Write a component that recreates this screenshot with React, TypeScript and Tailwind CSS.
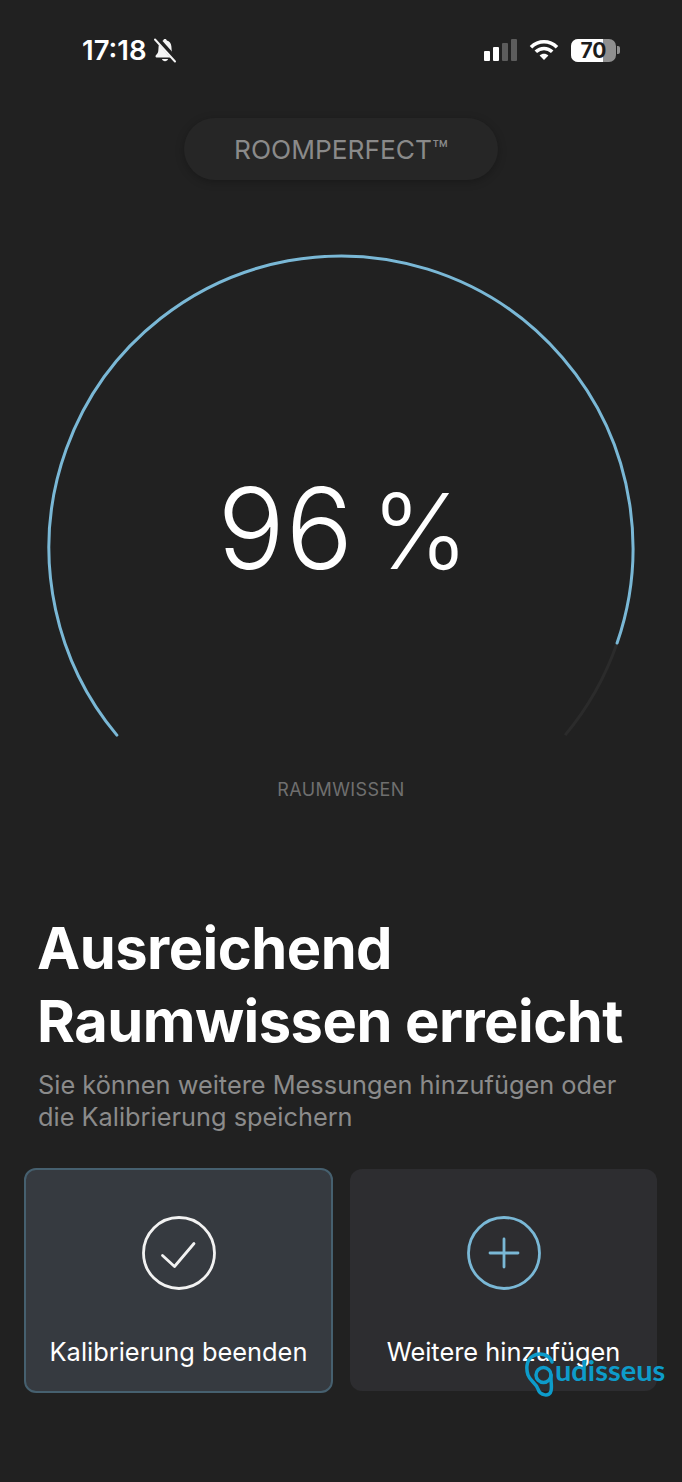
function StatusBar() {
  return (
    <div className="h-[100px] px-[82px] pt-[34px] flex justify-between items-start text-white">
      <div className="flex items-center gap-[6px] h-[32px]">
        <span className="text-[27.500px] leading-[32px] font-semibold">17:18</span>
        <svg width="24" height="26" viewBox="0 0 24 26" fill="#f4f4f4">
          <path d="M12 2c-1 0-1.700.7-1.800 1.600C7.600 4.300 5.800 6.400 5.600 9.500l-.3 4.200c-.1 1.800-1 3-2 4.100-.5.5-.8 1-.8 1.500 0 .8.600 1.300 1.500 1.300h16c.9 0 1.500-.5 1.500-1.300 0-.5-.3-1-.8-1.500-1-1.100-1.900-2.300-2-4.100l-.3-4.200c-.2-3.100-2-5.200-4.600-5.900C13.700 2.700 13 2 12 2z" />
          <path d="M9 22h6c-.3 1.300-1.500 2.200-3 2.200S9.300 23.300 9 22z" />
          <path d="M3.500 1 23 23" stroke="#212121" strokeWidth="5" />
          <path d="M2 2.500 22 24.500" stroke="#f4f4f4" strokeWidth="2" strokeLinecap="round" />
        </svg>
      </div>
      <div className="flex items-center gap-[12px] h-[32px] -mr-[20px]">
        <div className="flex items-end gap-[3px] h-[22px]">
          <div className="w-[6px] h-[10px] rounded-[1px] bg-white" />
          <div className="w-[6px] h-[14px] rounded-[1px] bg-white" />
          <div className="w-[6px] h-[18px] rounded-[1px] bg-[#5c5c5c]" />
          <div className="w-[6px] h-[22px] rounded-[1px] bg-[#5c5c5c]" />
        </div>
        <svg width="30" height="22" viewBox="0 0 30 22" fill="none" stroke="#fff" strokeWidth="3.600">
          <path d="M2 8.200C9.500 1 20.500 1 28 8.200" />
          <path d="M6.800 12.800C11.500 8.300 18.500 8.300 23.200 12.800" />
          <path d="M15 21l-4.400-4.600c2.500-2.200 6.300-2.200 8.800 0z" fill="#fff" stroke="none" />
        </svg>
        <div className="flex items-center gap-[1px]">
          <div className="relative w-[45px] h-[23px] rounded-[7px] overflow-hidden bg-[#8f8f8f] flex items-center justify-center">
            <div className="absolute left-0 top-0 bottom-0 w-[32px] bg-white" />
            <span className="relative text-[21px] leading-none font-bold text-[#1c1c1c]">70</span>
          </div>
          <div className="w-[3px] h-[8px] rounded-r-[2px] bg-[#8f8f8f]" />
        </div>
      </div>
    </div>
  );
}

function Gauge() {
  return (
    <div className="relative h-[500px] mt-[72px] mx-[46px]">
      <svg className="absolute inset-0" width="590" height="500" viewBox="46 252 590 500" fill="none">
        <path d="M617.090 643.070A292 292 0 0 1 565.140 735.150" stroke="#2b2b2b" strokeWidth="3" />
        <path
          d="M116.860 735.150A292 292 0 1 1 617.090 643.070"
          stroke="#7ab8d6"
          strokeWidth="3"
          strokeLinecap="round"
        />
      </svg>
      <div className="absolute inset-x-0 top-[211px] pl-[4px] flex justify-center items-baseline gap-[17px] font-light text-white leading-[130px]">
        <span className="text-[112px] tracking-[1px]">96</span>
        <span className="text-[104px]">%</span>
      </div>
    </div>
  );
}

function ActionCard({ active, label, children }: { active?: boolean; label: string; children: React.ReactNode }) {
  return (
    <div
      className={
        active
          ? "w-[309px] h-[225px] rounded-[12px] border-[2px] border-[#46606f] bg-[#363a40] flex flex-col items-center pt-[46px]"
          : "w-[307px] h-[222px] mt-[1px] rounded-[12px] bg-[#2d2d30] flex flex-col items-center pt-[47px]"
      }
    >
      {children}
      <div className="mt-[46px] text-[25.400px] leading-[32px] text-white">{label}</div>
    </div>
  );
}

export default function App() {
  return (
    <div
      className="relative w-[682px] h-[1482px] overflow-hidden bg-[#212121]"
      style={{ fontFamily: "Inter, 'Liberation Sans', sans-serif" }}
    >
      <StatusBar />
      <div className="flex justify-center mt-[18px]">
        <div className="w-[314px] h-[62px] pt-[2px] rounded-full bg-[#262626] shadow-[0_2px_8px_rgba(0,0,0,0.25)] flex items-center justify-center text-[26.300px] text-[#8a8a8a]">
          ROOMPERFECT™
        </div>
      </div>
      <Gauge />
      <div className="mt-[27px] text-center text-[18px] leading-[22px] text-[#6f6f6f] tracking-[0.4px]">
        RAUMWISSEN
      </div>
      <div className="pl-[37px] pr-[38px] mt-[111px]">
        <h1 className="text-[57.800px] leading-[73px] font-bold text-white tracking-[-0.5px] whitespace-nowrap">
          Ausreichend
          <br />
          Raumwissen erreicht
        </h1>
        <p className="mt-[11px] ml-[1px] text-[25.350px] leading-[32px] text-[#8b8b8b] whitespace-nowrap">
          Sie können weitere Messungen hinzufügen oder
          <br />
          die Kalibrierung speichern
        </p>
      </div>
      <div className="flex gap-[17px] pl-[24px] mt-[35px] items-start">
        <ActionCard active label="Kalibrierung beenden">
          <svg width="74" height="74" viewBox="0 0 74 74" fill="none" stroke="#f2f2f2" strokeWidth="2.800" strokeLinecap="round" strokeLinejoin="round">
            <circle cx="37" cy="37" r="35.500" />
            <path d="M20.500 39.500 32.500 50.500 52 27.500" />
          </svg>
        </ActionCard>
        <ActionCard label="Weitere hinzufügen">
          <svg width="74" height="74" viewBox="0 0 74 74" fill="none" stroke="#7ab8d6" strokeWidth="2.800" strokeLinecap="round">
            <circle cx="37" cy="37" r="35.500" />
            <path d="M23 37H51M37 23V51" />
          </svg>
        </ActionCard>
      </div>
      <div className="absolute left-[525px] top-[1351px] flex items-start">
        <svg width="32" height="48" viewBox="0 0 32 48" fill="none" stroke="#0d9ccb" strokeWidth="3.500" strokeLinecap="round">
          <path d="M27 11C24 3 14 1 8 5 1 9 1 18 3 24c2 6 8 8 10 14 2 7 12 8 13 2 1-4 0-8 0-12v-4" />
          <circle cx="18.500" cy="24" r="7.500" />
        </svg>
        <span className="text-[29px] leading-[38px] -ml-[2px] text-[#0d9ccb] font-bold" style={{ fontFamily: "Lato, sans-serif" }}>
          udisseus
        </span>
      </div>
    </div>
  );
}
